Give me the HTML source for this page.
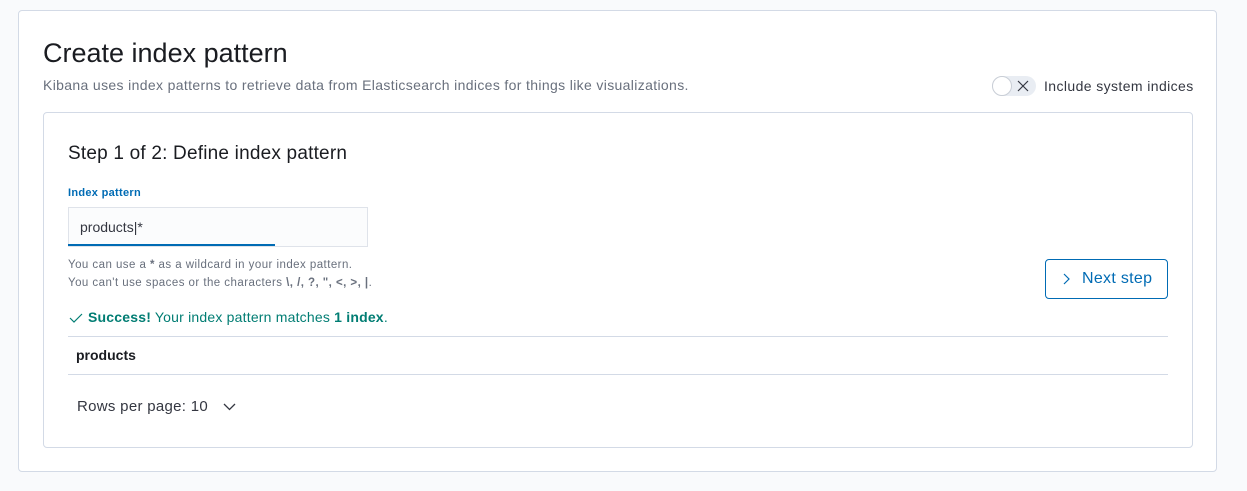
<!DOCTYPE html><html><head><style>
body{margin:0;background:#f9fafc;font-family:"Liberation Sans",sans-serif;width:1247px;height:491px;position:relative;overflow:hidden;color:#343741}
.outer{position:absolute;left:18px;top:10px;width:1199px;height:462px;background:#fff;border:1px solid #d3dae6;border-radius:4px;box-sizing:border-box}
.inner{position:absolute;left:43px;top:112px;width:1150px;height:336px;border:1px solid #d3dae6;border-radius:4px;box-sizing:border-box;background:#fff}
.a{position:absolute;white-space:nowrap}
</style></head><body>
<div class="outer"></div>
<div class="a" style="left:43px;top:38px;font-size:27px;color:#1a1c21">Create index pattern</div>
<div class="a" style="left:43px;top:77px;font-size:14px;color:#69707d;letter-spacing:0.35px">Kibana uses index patterns to retrieve data from Elasticsearch indices for things like visualizations.</div>
<div class="a" style="left:992px;top:76px;width:44px;height:20px;border-radius:10px;background:#e9edf3"></div>
<div class="a" style="left:992px;top:76px;width:18px;height:18px;border-radius:50%;background:#fff;border:1px solid #c9ced6"></div>
<svg class="a" style="left:1017px;top:80px" width="12" height="12" viewBox="0 0 12 12"><path d="M1 1L11 11M11 1L1 11" stroke="#343741" stroke-width="1.2"/></svg>
<div class="a" style="left:1044px;top:78px;font-size:14px;color:#343741;letter-spacing:0.4px">Include system indices</div>
<div class="inner"></div>
<div class="a" style="left:68px;top:143px;font-size:19px;color:#1a1c21;letter-spacing:0.2px">Step 1 of 2: Define index pattern</div>
<div class="a" style="left:68px;top:187px;font-size:11px;font-weight:bold;color:#006bb4;letter-spacing:0.3px">Index pattern</div>
<div class="a" style="left:68px;top:207px;width:300px;height:40px;background:#fbfcfd;border:1px solid #dfe3ea;box-sizing:border-box"></div>
<div class="a" style="left:68px;top:244px;width:207px;height:2px;background:#006bb4"></div>
<div class="a" style="left:80px;top:219px;font-size:14px;color:#343741">products<span style="font-weight:100">|</span>*</div>
<div class="a" style="left:68px;top:256px;font-size:11.5px;color:#69707d;line-height:18px;letter-spacing:0.45px">You can use a <b>*</b> as a wildcard in your index pattern.<br>You can't use spaces or the characters <b>\, /, ?, ", &lt;, &gt;, |</b>.</div>
<svg class="a" style="left:69px;top:313px" width="14" height="10" viewBox="0 0 14 10"><path d="M1 5L5 9L13 1" stroke="#017d73" stroke-width="1.2" fill="none"/></svg>
<div class="a" style="left:88px;top:309px;font-size:14px;color:#017d73;letter-spacing:0.2px"><b>Success!</b> Your index pattern matches <b>1 index</b>.</div>
<div class="a" style="left:68px;top:336px;width:1100px;height:1px;background:#d3dae6"></div>
<div class="a" style="left:76px;top:347px;font-size:14px;font-weight:bold;color:#1a1c21">products</div>
<div class="a" style="left:68px;top:374px;width:1100px;height:1px;background:#d3dae6"></div>
<div class="a" style="left:77px;top:398px;font-size:15px;color:#343741;letter-spacing:0.3px">Rows per page: 10</div>
<svg class="a" style="left:223px;top:403px" width="13" height="8" viewBox="0 0 13 8"><path d="M1 1L6.5 6.5L12 1" stroke="#343741" stroke-width="1.3" fill="none"/></svg>
<div class="a" style="left:1045px;top:259px;width:123px;height:40px;border:1px solid #006bb4;border-radius:4px;box-sizing:border-box"></div>
<svg class="a" style="left:1063px;top:273px" width="7" height="12" viewBox="0 0 7 12"><path d="M1 1L6 6L1 11" stroke="#006bb4" stroke-width="1.2" fill="none"/></svg>
<div class="a" style="left:1082px;top:270px;font-size:16px;color:#006bb4;letter-spacing:0.3px">Next step</div>
</body></html>
